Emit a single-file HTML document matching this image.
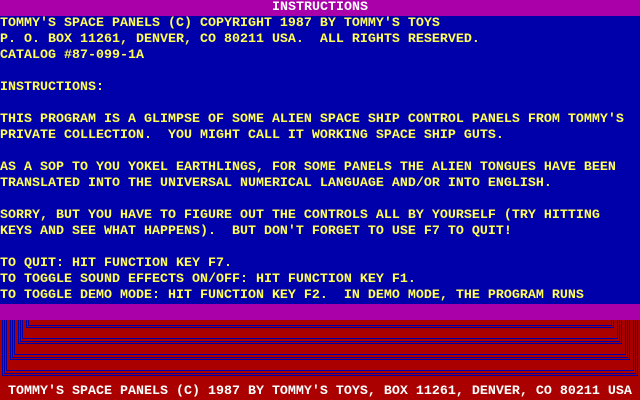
<!DOCTYPE html>
<html><head><style>
html,body{margin:0;padding:0;background:#0000AA;width:640px;height:400px;overflow:hidden}
.t{position:absolute;left:0;width:640px;font-family:"Liberation Mono",monospace;font-size:13.33px;font-weight:bold;line-height:16px;white-space:pre;color:#FFFF55}
</style></head><body>
<div style="position:absolute;left:0;top:0;width:640px;height:16px;background:#AA00AA"></div>
<div class="t" style="top:0;color:#fff;text-align:center">INSTRUCTIONS</div>
<div class="t" style="top:16px">TOMMY'S SPACE PANELS (C) COPYRIGHT 1987 BY TOMMY'S TOYS
P. O. BOX 11261, DENVER, CO 80211 USA.  ALL RIGHTS RESERVED.
CATALOG #87-099-1A

INSTRUCTIONS:

THIS PROGRAM IS A GLIMPSE OF SOME ALIEN SPACE SHIP CONTROL PANELS FROM TOMMY'S
PRIVATE COLLECTION.  YOU MIGHT CALL IT WORKING SPACE SHIP GUTS.

AS A SOP TO YOU YOKEL EARTHLINGS, FOR SOME PANELS THE ALIEN TONGUES HAVE BEEN
TRANSLATED INTO THE UNIVERSAL NUMERICAL LANGUAGE AND/OR INTO ENGLISH.

SORRY, BUT YOU HAVE TO FIGURE OUT THE CONTROLS ALL BY YOURSELF (TRY HITTING
KEYS AND SEE WHAT HAPPENS).  BUT DON'T FORGET TO USE F7 TO QUIT!

TO QUIT: HIT FUNCTION KEY F7.
TO TOGGLE SOUND EFFECTS ON/OFF: HIT FUNCTION KEY F1.
TO TOGGLE DEMO MODE: HIT FUNCTION KEY F2.  IN DEMO MODE, THE PROGRAM RUNS</div>
<div style="position:absolute;left:0;top:304px;width:640px;height:16px;background:#AA00AA"></div>
<svg style="position:absolute;left:0;top:320px" width="640" height="80" viewBox="0 320 640 80" shape-rendering="crispEdges">
<rect x="0" y="320" width="640" height="80" fill="#AA0000"/>
<g stroke="#0000AA" stroke-width="1" fill="none">
<path d="M2.5 320V375.5H637.5V320M4.5 320V373.5H635.5V320"/>
<path d="M6.5 320V370.5H633.5V320"/>
<path d="M10.5 320V359.5H629.5V320M12.5 320V357.5H627.5V320"/>
<path d="M14.5 320V354.5H625.5V320"/>
<path d="M18.5 320V343.5H621.5V320M20.5 320V341.5H619.5V320"/>
<path d="M22.5 320V338.5H617.5V320"/>
<path d="M26.5 320V327.5H613.5V320M28.5 320V325.5H611.5V320"/>
</g></svg>
<div class="t" style="top:384px;color:#fff"> TOMMY'S SPACE PANELS (C) 1987 BY TOMMY'S TOYS, BOX 11261, DENVER, CO 80211 USA</div>
</body></html>
